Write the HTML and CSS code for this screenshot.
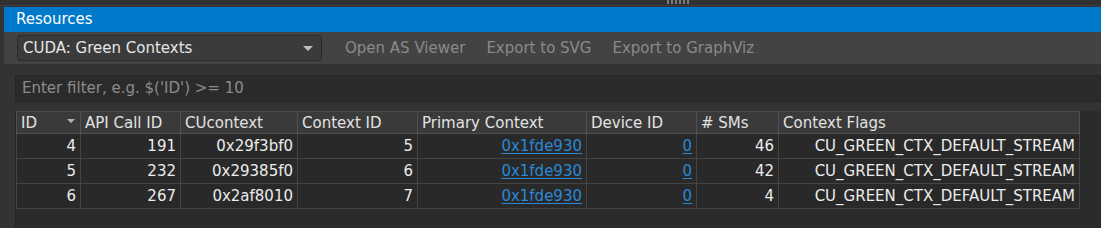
FILE: index.html
```html
<!DOCTYPE html>
<html>
<head>
<meta charset="utf-8">
<link rel="stylesheet" href="styles.css">
</head>
<body>
<div class="topstrip"><span class="grip"><i></i><i></i><i></i><i></i><i></i><i></i></span></div>
<div class="panel">
  <div class="title">Resources</div>
  <div class="toolbar">
    <div class="combo"><span>CUDA: Green Contexts</span><span class="caret"></span></div>
    <span class="tbtn">Open AS Viewer</span>
    <span class="tbtn">Export to SVG</span>
    <span class="tbtn">Export to GraphViz</span>
  </div>
  <div class="content">
    <div class="filter">Enter filter, e.g. $('ID') &gt;= 10</div>
    <div class="view">
      <table class="grid">
        <colgroup>
          <col class="c1"><col class="c2"><col class="c3"><col class="c4"><col class="c5"><col class="c6"><col class="c7"><col class="c8">
        </colgroup>
        <thead>
          <tr>
            <th><div class="sorth"><span>ID</span><span class="sortarrow"></span></div></th>
            <th>API Call ID</th>
            <th>CUcontext</th>
            <th>Context ID</th>
            <th>Primary Context</th>
            <th>Device ID</th>
            <th># SMs</th>
            <th>Context Flags</th>
          </tr>
        </thead>
        <tbody>
          <tr><td>4</td><td>191</td><td>0x29f3bf0</td><td>5</td><td><a>0x1fde930</a></td><td><a>0</a></td><td>46</td><td>CU_GREEN_CTX_DEFAULT_STREAM</td></tr>
          <tr><td>5</td><td>232</td><td>0x29385f0</td><td>6</td><td><a>0x1fde930</a></td><td><a>0</a></td><td>42</td><td>CU_GREEN_CTX_DEFAULT_STREAM</td></tr>
          <tr><td>6</td><td>267</td><td>0x2af8010</td><td>7</td><td><a>0x1fde930</a></td><td><a>0</a></td><td>4</td><td>CU_GREEN_CTX_DEFAULT_STREAM</td></tr>
        </tbody>
      </table>
    </div>
  </div>
</div>
</body>
</html>
```
FILE: styles.css
```css
html, body {
  margin: 0;
  padding: 0;
  background: #333333;
  font-family: "DejaVu Sans", "Liberation Sans", sans-serif;
  font-size: 15px;
  color: #e4e4e4;
  overflow: hidden;
}

.topstrip {
  height: 5px;
  background: #313131;
  border-bottom: 1px solid #3e3e3e;
  margin-bottom: 1px;
  display: flex;
  padding-left: 667px;
}

.grip {
  display: flex;
  gap: 2px;
  height: 4px;
}

.grip i {
  display: block;
  width: 2px;
  height: 4px;
  background: #7a7a7a;
}

.panel {
  margin-left: 4px;
}

.title {
  height: 25px;
  line-height: 24px;
  background: #0179ca;
  color: #ffffff;
  padding-left: 12px;
}

.toolbar {
  height: 32px;
  background: #434343;
  display: flex;
  align-items: center;
  padding-left: 13px;
}

.combo {
  box-sizing: border-box;
  width: 305px;
  height: 26px;
  background: #3b3b3b;
  border: 1px solid #2a2a2a;
  border-radius: 3px;
  display: flex;
  align-items: center;
  justify-content: space-between;
  padding: 0 8px 0 5px;
  color: #e6e6e6;
}

.caret {
  width: 0;
  height: 0;
  border-left: 5px solid transparent;
  border-right: 5px solid transparent;
  border-top: 5px solid #bdbdbd;
  margin-top: 1px;
}

.tbtn {
  color: #8a8a8a;
  margin-left: 23px;
}

.tbtn + .tbtn {
  margin-left: 21px;
}

.content {
  padding: 11px 0 0 11px;
  background: #333333;
}

.filter {
  box-sizing: border-box;
  height: 27px;
  background: #2b2b2b;
  border: 1px solid #262626;
  color: #8c8c8c;
  padding-left: 6px;
  line-height: 25px;
}

.view {
  margin-top: 9px;
  height: 120px;
  background: #2b2b2b;
  border-left: 1px solid #262626;
}

.grid {
  border-collapse: collapse;
  table-layout: fixed;
  width: 1063px;
}

.c1 { width: 64px; }
.c2 { width: 100px; }
.c3 { width: 117px; }
.c4 { width: 120px; }
.c5 { width: 169px; }
.c6 { width: 110px; }
.c7 { width: 82px; }
.c8 { width: 301px; }

.grid th {
  height: 21px;
  background: #3a3a3a;
  border: 1px solid #515151;
  border-top-color: #4a4a4a;
  font-weight: normal;
  text-align: left;
  padding: 0 4px;
  color: #e2e2e2;
  white-space: nowrap;
}

.sorth {
  display: flex;
  align-items: center;
  justify-content: space-between;
}

.sortarrow {
  width: 0;
  height: 0;
  border-left: 4px solid transparent;
  border-right: 4px solid transparent;
  border-top: 4px solid #b5b5b5;
  margin-right: 1px;
  margin-top: -4px;
}

.grid td {
  height: 24px;
  background: #292929;
  border: 1px solid #444444;
  text-align: right;
  padding: 0 4px;
  white-space: nowrap;
  color: #ececec;
}

.grid a {
  color: #2a88d8;
  text-decoration: underline;
  text-underline-offset: 2px;
}
```
